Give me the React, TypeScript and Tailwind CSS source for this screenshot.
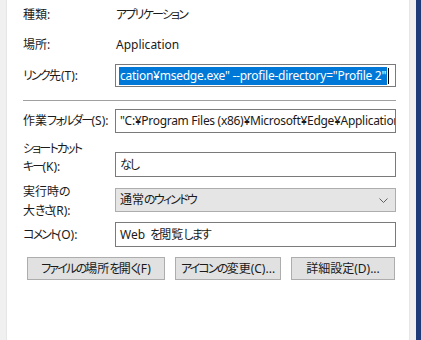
import React from "react";

const font = {
  fontFamily: '"Noto Sans", "Noto Sans CJK JP", sans-serif',
};

function J({ t }: { t: string }) {
  const parts = t.split(/([\u3041-\u30ff]+)/);
  return (
    <>
      {parts.map((p, i) =>
        /[\u3041-\u30ff]/.test(p) ? (
          <span key={i} className="tracking-[-1.8px]">
            {p}
          </span>
        ) : (
          <React.Fragment key={i}>{p}</React.Fragment>
        )
      )}
    </>
  );
}

function Label({ children }: { children: React.ReactNode }) {
  return (
    <div className="w-[92px] shrink-0 whitespace-nowrap text-[12px] leading-[18px] text-[#1a1a1a]">{children}</div>
  );
}

export default function App() {
  return (
    <div
      className="w-[421px] h-[340px] flex bg-white text-[12px] text-[#1a1a1a] [font-feature-settings:'palt'] overflow-hidden"
      style={font}
    >
      <div className="w-[7px] shrink-0 bg-[#f0f0f0] border-r border-[#e6e6e6]" />
      <div className="flex-1 min-w-0 bg-white pl-[16px] pr-[13px] flex flex-col">
        {/* Row 1 */}
        <div className="mt-[6px] h-[18px] flex items-center">
          <Label>
            <J t="種類:" />
          </Label>
          <div className="pl-[1px]">
            <J t="アプリケーション" />
          </div>
        </div>
        {/* Row 2 */}
        <div className="mt-[12px] h-[18px] flex items-center">
          <Label>
            <J t="場所:" />
          </Label>
          <div className="pl-[1px]">Application</div>
        </div>
        {/* Row 3 */}
        <div className="mt-[10px] h-[23px] flex items-center">
          <Label>
            <J t="リンク先(T):" />
          </Label>
          <div className="flex-1 min-w-0 h-[23px] border border-[#7a7a7a] flex items-center pl-[3px] overflow-hidden whitespace-nowrap">
            <span className="bg-[#0078d7] text-white leading-[18px] px-[1px] tracking-[-0.25px]">
              cation¥msedge.exe" --profile-directory="Profile 2"
            </span>
            <span className="w-[1px] h-[16px] bg-black ml-[1px] shrink-0" />
          </div>
        </div>
        {/* separator */}
        <div className="mt-[13px] h-[1px] bg-[#a0a0a0]" />
        {/* Row 4 */}
        <div className="mt-[8px] h-[24px] flex items-center">
          <Label>
            <J t="作業フォルダー(S):" />
          </Label>
          <div className="flex-1 min-w-0 h-[24px] border border-[#7a7a7a] flex items-center pl-[4px] overflow-hidden whitespace-nowrap tracking-[-0.3px]">
            "C:¥Program Files (x86)¥Microsoft¥Edge¥Application"
          </div>
        </div>
        {/* Row 5 */}
        <div className="mt-[7px] flex items-start">
          <Label>
            <J t="ショートカット" />
            <br />
            <J t="キー(K):" />
          </Label>
          <div className="mt-[12px] flex-1 min-w-0 h-[25px] border border-[#7a7a7a] flex items-center pl-[4px]">
            <J t="なし" />
          </div>
        </div>
        {/* Row 6 */}
        <div className="mt-[5px] flex items-start">
          <Label>
            <div className="leading-[19px]">
              <J t="実行時の" />
            </div>
            <div className="leading-[19px]">
              <J t="大きさ(R):" />
            </div>
          </Label>
          <div className="mt-[6px] flex-1 min-w-0 h-[24px] border border-[#adadad] bg-[#e5e5e5] flex items-center pl-[4px] pr-[7px] justify-between">
            <span>
              <J t="通常のウィンドウ" />
            </span>
            <svg width="9" height="5" viewBox="0 0 9 5" fill="none">
              <path d="M0.5 0.5 L4.5 4.5 L8.5 0.5" stroke="#606060" strokeWidth="1" />
            </svg>
          </div>
        </div>
        {/* Row 7 */}
        <div className="mt-[2px] h-[25px] flex items-center">
          <Label>
            <J t="コメント(O):" />
          </Label>
          <div className="flex-1 min-w-0 h-[25px] border border-[#7a7a7a] flex items-center pl-[4px] whitespace-nowrap">
            <span>Web</span>
            <span className="ml-[5px]">
              <J t="を閲覧します" />
            </span>
          </div>
        </div>
        {/* Buttons */}
        <div className="mt-[10px] flex gap-[10px] pl-[4px]">
          <div className="w-[138px] shrink-0 h-[23px] border border-[#adadad] bg-[#e1e1e1] flex items-center justify-center whitespace-nowrap">
            <J t="ファイルの場所を開く(F)" />
          </div>
          <div className="w-[106px] shrink-0 h-[23px] border border-[#adadad] bg-[#e1e1e1] flex items-center justify-center whitespace-nowrap">
            <J t="アイコンの変更(C)..." />
          </div>
          <div className="w-[104px] shrink-0 h-[23px] border border-[#adadad] bg-[#e1e1e1] flex items-center justify-center whitespace-nowrap">
            <J t="詳細設定(D)..." />
          </div>
        </div>
      </div>
      <div className="w-[7px] shrink-0 bg-[#f0f0f0] border-l border-[#e6e6e6]" />
      <div className="w-[5px] shrink-0 bg-[#1f3c7a]" />
    </div>
  );
}
